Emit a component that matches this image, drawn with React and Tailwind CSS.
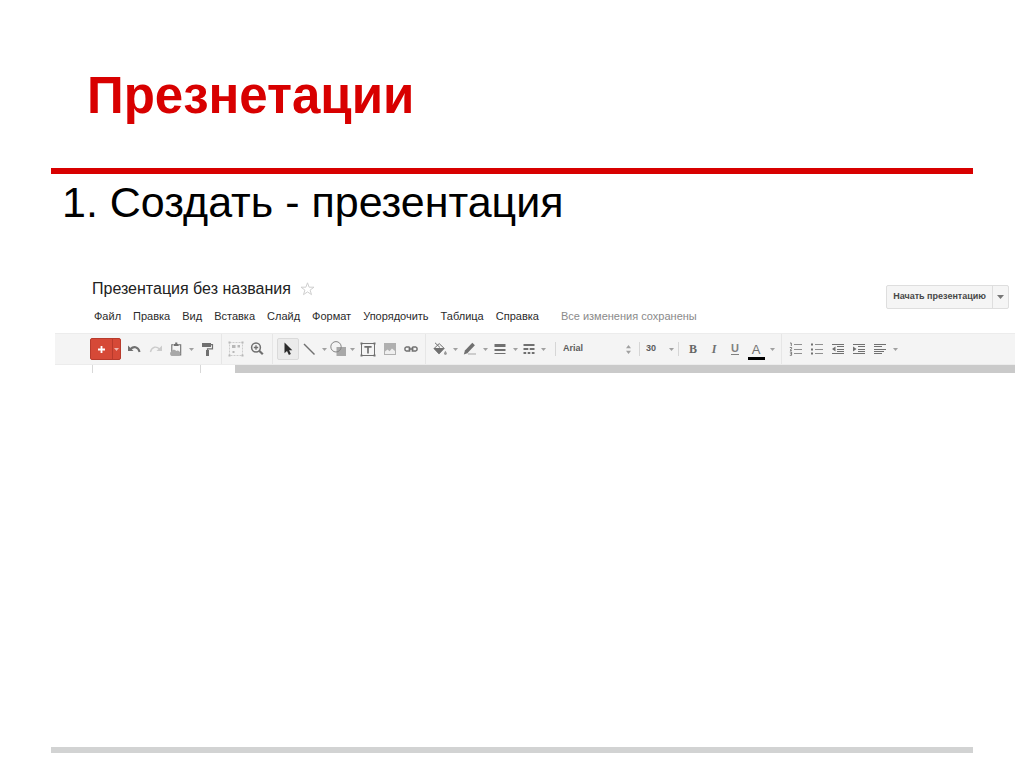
import React from "react";

const svgBase = {
  width: 16,
  height: 16,
  viewBox: "0 0 16 16",
  fill: "none",
  stroke: "#707070",
  "aria-hidden": true,
};

function Icon({ children, ...rest }) {
  return (
    <svg {...svgBase} {...rest}>
      {children}
    </svg>
  );
}

function Tool({ label, width = "w-5", children }) {
  return (
    <button
      type="button"
      aria-label={label}
      className={`flex h-6 shrink-0 items-center justify-center ${width}`}
    >
      {children}
    </button>
  );
}

function Caret({ label, width = "w-[10px]" }) {
  return (
    <button
      type="button"
      aria-label={label}
      className={`flex h-6 shrink-0 items-center justify-center ${width}`}
    >
      <svg width="5" height="3" viewBox="0 0 5 3" aria-hidden="true">
        <path d="M0 0H5L2.5 3Z" fill="#a0a0a0" />
      </svg>
    </button>
  );
}

function Separator() {
  return <span className="mx-1 w-px shrink-0 self-stretch bg-[#e6e6e6]" />;
}

function ShortSeparator() {
  return <span className="mx-1 h-[14px] w-px shrink-0 bg-[#d6d6d6]" />;
}

const menus = [
  "Файл",
  "Правка",
  "Вид",
  "Вставка",
  "Слайд",
  "Формат",
  "Упорядочить",
  "Таблица",
  "Справка",
];

function EditorHeader() {
  return (
    <header className="flex items-start justify-between pr-[6px] pl-[37px]">
      <div>
        <div className="flex h-6 items-center gap-[9px]">
          <h2 className="text-[16px] leading-6 text-[#222]">
            Презентация без названия
          </h2>
          <button type="button" aria-label="Пометить">
            <svg width="15" height="15" viewBox="0 0 15 15" aria-hidden="true">
              <path
                d="M7.5 0.8L9.1 5.2H14L10.1 8.1L11.5 12.6L7.5 9.9L3.5 12.6L4.9 8.1L1 5.2H5.9Z"
                fill="#fff"
                stroke="#cfcfcf"
              />
            </svg>
          </button>
        </div>
        <nav className="mt-[5px] flex h-5 items-center gap-3 pl-[2px] text-[11px] text-[#2b2b2b]">
          {menus.map((name) => (
            <button type="button" key={name}>
              {name}
            </button>
          ))}
          <span className="ml-[10px] text-[#8a8a8a]">
            Все изменения сохранены
          </span>
        </nav>
      </div>
      <div className="mt-2 flex h-6 rounded-[2px] border border-[#dedede] bg-[#f5f5f5]">
        <button
          type="button"
          className="px-[6px] text-[9px] font-bold text-[#484848]"
        >
          Начать презентацию
        </button>
        <button
          type="button"
          aria-label="Варианты показа"
          className="flex w-4 items-center justify-center border-l border-[#dedede]"
        >
          <svg width="7" height="4" viewBox="0 0 7 4" aria-hidden="true">
            <path d="M0 0H7L3.5 4Z" fill="#777" />
          </svg>
        </button>
      </div>
    </header>
  );
}

function Toolbar() {
  return (
    <div className="flex h-8 items-center border-y border-[#ececec] bg-[#f4f4f4] pl-[35px]">
      <div className="mr-[2px] flex h-[22px] w-[31px] shrink-0 rounded-[2px] border border-[#b83a2c] bg-[#d64937]">
        <button
          type="button"
          aria-label="Новый слайд"
          className="flex flex-1 items-center justify-center"
        >
          <svg width="7" height="7" viewBox="0 0 7 7" aria-hidden="true">
            <path d="M3.5 0V7M0 3.5H7" stroke="#fff" strokeWidth="1.8" />
          </svg>
        </button>
        <button
          type="button"
          aria-label="Выбрать макет"
          className="flex w-2 items-center justify-center border-l border-[#b83a2c]"
        >
          <svg width="5" height="3" viewBox="0 0 5 3" aria-hidden="true">
            <path d="M0 0H5L2.5 3Z" fill="#f0b5ae" />
          </svg>
        </button>
      </div>

      <Tool label="Отменить" width="w-[22px]">
        <Icon>
          <path d="M2 4.5V10H7.5Z" fill="#707070" stroke="none" />
          <path d="M4.5 8C7.5 5 12 5.4 13.6 11" strokeWidth="2" />
        </Icon>
      </Tool>
      <Tool label="Повторить" width="w-[22px]">
        <Icon stroke="#cccccc">
          <path d="M14 4.5V10H8.5Z" fill="#cccccc" stroke="none" />
          <path d="M11.5 8C8.5 5 4 5.4 2.4 11" strokeWidth="1.4" />
        </Icon>
      </Tool>
      <Tool label="Буфер обмена" width="w-[18px]">
        <Icon>
          <path d="M5.5 3.8H3.8V14H12.7V3.8H10.8" strokeWidth="1.1" />
          <path d="M5.8 5V3H7.2V1.6H9.3V3H10.7V5Z" fill="#707070" stroke="none" />
          <path
            d="M4 14.8A2.2 2.2 0 0 1 3 10.8A2.9 2.9 0 0 1 8.2 10A2.5 2.5 0 0 1 10.8 14.8Z"
            fill="#a8a8a8"
            stroke="none"
          />
        </Icon>
      </Tool>
      <Caret label="Параметры буфера" width="w-3" />
      <Tool label="Копировать форматирование">
        <Icon>
          <path d="M3 2H12V6H3Z" fill="#707070" stroke="none" />
          <path d="M12 3.6H13.5V7.8H8.5V9.5" strokeWidth="1.2" />
          <path d="M7 9H10V15H7Z" fill="#707070" stroke="none" />
        </Icon>
      </Tool>
      <Separator />
      <Tool label="Выделить группу">
        <Icon stroke="#cccccc">
          <path d="M1.5 1.5H14.5V14.5H1.5Z" strokeDasharray="2 1" />
          <path
            d="M0.5 0.5H2.5V2.5H0.5ZM13.5 0.5H15.5V2.5H13.5ZM0.5 13.5H2.5V15.5H0.5ZM13.5 13.5H15.5V15.5H13.5ZM4 4H7.5V7H4ZM9.5 4H12V6.5H9.5ZM4.5 10H6.5V12H4.5Z"
            fill="#b8b8b8"
            stroke="none"
          />
        </Icon>
      </Tool>
      <Tool label="Масштаб" width="w-[22px]">
        <Icon>
          <circle cx="7" cy="6.5" r="4.4" strokeWidth="1.5" />
          <path d="M10.2 9.7L13.8 13.3" strokeWidth="2.2" />
          <path d="M7 4.3V8.7M4.8 6.5H9.2" strokeWidth="1.3" />
        </Icon>
      </Tool>
      <Separator />
      <button
        type="button"
        aria-label="Выбрать"
        className="flex h-[22px] w-[22px] shrink-0 items-center justify-center rounded-[2px] border border-[#dadada] bg-[#ebebeb]"
      >
        <Icon>
          <path
            d="M4.5 1.5V12.2L7 9.9L8.9 14L10.9 13.1L9.1 9.2H12.3Z"
            fill="#2b2b2b"
            stroke="none"
          />
        </Icon>
      </button>
      <Tool label="Линия">
        <Icon>
          <path d="M3 3L13.5 13.5" strokeWidth="1.4" />
        </Icon>
      </Tool>
      <Caret label="Виды линий" />
      <Tool label="Фигура" width="w-[18px]">
        <Icon>
          <path d="M6.5 6H16V15H6.5Z" fill="#a8a8a8" stroke="none" />
          <circle cx="6" cy="5.8" r="5.2" stroke="#858585" />
        </Icon>
      </Tool>
      <Caret label="Виды фигур" />
      <Tool label="Текстовое поле" width="w-[22px]">
        <Icon>
          <path d="M1.5 2.5H14.5V14.5H1.5Z" strokeWidth="1" />
          <path
            d="M0.5 1.5H2.5V3.5H0.5ZM13.5 1.5H15.5V3.5H13.5ZM0.5 13.5H2.5V15.5H0.5ZM13.5 13.5H15.5V15.5H13.5Z"
            fill="#707070"
            stroke="none"
          />
          <path d="M4.4 5.8H11.6M8 5.5V12.5" strokeWidth="1.7" />
        </Icon>
      </Tool>
      <Tool label="Изображение" width="w-[22px]">
        <Icon>
          <path d="M2 2H14V14H2Z" fill="#b0b0b0" stroke="none" />
          <path
            d="M3 13V10.5L5.5 8.5L7.5 10.3L10 7.5L13 10V13Z"
            fill="#efefef"
            stroke="none"
          />
        </Icon>
      </Tool>
      <Tool label="Ссылка">
        <Icon>
          <path
            d="M6.6 5.9H3.4A2.2 2.2 0 0 0 3.4 10.1H6.6V5.9M9.4 5.9H12.6A2.2 2.2 0 0 1 12.6 10.1H9.4V5.9M5.5 8H10.5"
            strokeWidth="1.5"
          />
        </Icon>
      </Tool>
      <Separator />
      <Tool label="Цвет заливки">
        <Icon>
          <path d="M3 1.8L8 6.5M7.2 2.6L12.2 7.4L7 12.6L2 7.6Z" />
          <path d="M1.5 7H12.5L7 13.2Z" fill="#707070" stroke="none" />
          <path
            d="M13.4 9.8C14.4 11.2 14.8 12 14.8 12.6A1.4 1.4 0 0 1 12 12.6C12 12 12.4 11.2 13.4 9.8Z"
            fill="#999999"
            stroke="none"
          />
        </Icon>
      </Tool>
      <Caret label="Варианты заливки" />
      <Tool label="Цвет линии">
        <Icon>
          <path d="M4 11L11.6 3" strokeWidth="3.6" />
          <path d="M1.8 13.5L3 9.2L5.9 12Z" fill="#707070" stroke="none" />
          <path d="M6 13H14" stroke="#a5a5a5" />
        </Icon>
      </Tool>
      <Caret label="Варианты цвета линии" />
      <Tool label="Толщина линии">
        <Icon>
          <path d="M2.5 4.5H13.5" strokeWidth="3" />
          <path d="M2.5 9H13.5" strokeWidth="2" />
          <path d="M2.5 12.5H13.5" />
        </Icon>
      </Tool>
      <Caret label="Варианты толщины" />
      <Tool label="Штрих линии" width="w-[18px]">
        <Icon>
          <path d="M2.5 4H13.5" strokeWidth="2" />
          <path d="M2.5 8H7.3M8.7 8H13.5" strokeWidth="2" />
          <path d="M2.5 12H5.2M6.7 12H9.3M10.8 12H13.5" strokeWidth="2" />
        </Icon>
      </Tool>
      <Caret label="Варианты штриха" />
      <span className="w-[3px] shrink-0" />
      <ShortSeparator />
      <div className="flex w-[75px] shrink-0 items-center justify-between pl-[3px] text-[9px] font-bold text-[#5c5c5c]">
        <select
          aria-label="Шрифт"
          defaultValue="Arial"
          className="w-14 appearance-none bg-transparent"
        >
          <option>Arial</option>
        </select>
        <svg
          className="mr-1"
          width="5"
          height="9"
          viewBox="0 0 5 9"
          aria-hidden="true"
        >
          <path d="M0 3.2H5L2.5 0ZM0 5.8H5L2.5 9Z" fill="#a0a0a0" />
        </svg>
      </div>
      <ShortSeparator />
      <div className="flex w-[30px] shrink-0 items-center justify-between pl-[2px] text-[9px] font-bold text-[#5c5c5c]">
        <select
          aria-label="Размер шрифта"
          defaultValue="30"
          className="w-4 appearance-none bg-transparent"
        >
          <option>30</option>
        </select>
        <svg width="5" height="3" viewBox="0 0 5 3" aria-hidden="true">
          <path d="M0 0H5L2.5 3Z" fill="#a0a0a0" />
        </svg>
      </div>
      <ShortSeparator />
      <Tool label="Полужирный">
        <span className="font-['Liberation_Serif',serif] text-[12px] leading-4 font-bold text-[#666]">
          B
        </span>
      </Tool>
      <Tool label="Курсив" width="w-[22px]">
        <span className="font-['Liberation_Serif',serif] text-[12px] leading-4 font-bold text-[#707070] italic">
          I
        </span>
      </Tool>
      <Tool label="Подчеркнутый">
        <span className="border-b border-[#808080] text-[11px] leading-[11px] font-bold text-[#808080]">
          U
        </span>
      </Tool>
      <Tool label="Цвет текста" width="w-[22px]">
        <span className="mt-1 w-[17px] border-b-3 border-black text-center text-[13px] leading-[14px] text-[#707070]">
          A
        </span>
      </Tool>
      <Caret label="Варианты цвета текста" />
      <Separator />
      <Tool label="Нумерованный список">
        <Icon>
          <path d="M6 3.5H14M6 8.5H14M6 12.5H14" stroke="#909090" />
          <path
            d="M2 2H3.3V5M1.8 6.5H3.6V7.8L2 9.3H4M1.8 11H3.6V14.3H1.8M2.4 12.6H3.6"
            strokeWidth="0.9"
          />
        </Icon>
      </Tool>
      <Tool label="Маркированный список" width="w-[22px]">
        <Icon>
          <path d="M6 3.5H14M6 8.5H14M6 12.5H14" stroke="#909090" />
          <path d="M2 3.5H4M2 8.5H4M2 12.5H4" strokeWidth="2" />
        </Icon>
      </Tool>
      <Tool label="Уменьшить отступ">
        <Icon>
          <path d="M2 3.5H14M7 5.5H14M7 8.5H14M7 10.5H14M2 12.5H14" />
          <path d="M5.5 5.5V10.5L2 8Z" fill="#707070" stroke="none" />
        </Icon>
      </Tool>
      <Tool label="Увеличить отступ" width="w-[22px]">
        <Icon>
          <path d="M2 3.5H14M7 5.5H14M7 8.5H14M7 10.5H14M2 12.5H14" />
          <path d="M2 5.5V10.5L5.5 8Z" fill="#707070" stroke="none" />
        </Icon>
      </Tool>
      <Tool label="Выравнивание">
        <Icon>
          <path d="M2 3.5H14M2 5.5H10M2 8.5H14M2 10.5H12M2 12.5H10" />
        </Icon>
      </Tool>
      <Caret label="Варианты выравнивания" />
    </div>
  );
}

export default function App() {
  return (
    <main className="flex min-h-screen flex-col bg-white pb-[15px] font-['Liberation_Sans',Arial,sans-serif]">
      <h1 className="mx-[51px] border-b-6 border-[#d80000] pt-[66px] pb-[42px] pl-9 text-[51px] leading-[60px] font-bold text-[#d80000]">
        Презнетации
      </h1>
      <p className="pt-1 pl-[62px] text-[43px] leading-12 text-black">
        1. Создать - презентация
      </p>
      <section
        aria-label="Редактор презентаций"
        className="mt-[51px] mr-[9px] ml-[55px]"
      >
        <EditorHeader />
        <div className="mt-[7px]">
          <Toolbar />
        </div>
        <div className="flex h-2">
          <div className="ml-[37px] w-[109px] shrink-0 border-x border-[#d8d8d8]" />
          <div className="ml-[34px] flex-1 bg-[#cacaca]" />
        </div>
      </section>
      <hr className="mx-[51px] mt-auto h-[6px] border-0 bg-[#d2d3d3]" />
    </main>
  );
}
